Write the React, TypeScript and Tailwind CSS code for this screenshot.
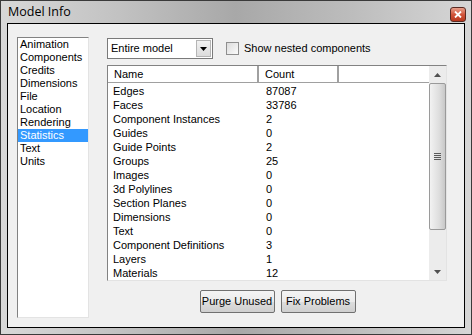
const CATEGORIES = [
  "Animation",
  "Components",
  "Credits",
  "Dimensions",
  "File",
  "Location",
  "Rendering",
  "Statistics",
  "Text",
  "Units",
];

const STATS: [string, string][] = [
  ["Edges", "87087"],
  ["Faces", "33786"],
  ["Component Instances", "2"],
  ["Guides", "0"],
  ["Guide Points", "2"],
  ["Groups", "25"],
  ["Images", "0"],
  ["3d Polylines", "0"],
  ["Section Planes", "0"],
  ["Dimensions", "0"],
  ["Text", "0"],
  ["Component Definitions", "3"],
  ["Layers", "1"],
  ["Materials", "12"],
];

export default function App() {
  return (
    <div
      className="flex h-[335px] w-[472px] flex-col border border-[#3a3a3a] bg-[linear-gradient(90deg,#d8d8d8_0%,#c2c2c2_25%,#a8a8a8_50%,#bdbdbd_75%,#d6d6d6_100%)] text-[10.5px] text-black"
      style={{ fontFamily: "'Liberation Sans', Arial, sans-serif" }}
    >
      <TitleBar />
      <div className="mx-[6px] mb-[6px] flex flex-1 border border-black bg-[#f0f0f0]">
        <ul className="ml-[9px] mt-[13px] h-[281px] w-[72px] border border-t-[#828282] border-l-[#828282] border-r-[#e3e3e3] border-b-[#e3e3e3] bg-white">
          {CATEGORIES.map((c) => (
            <li
              key={c}
              className={
                "h-[13px] whitespace-nowrap px-[2px] text-[11px] leading-[13px] " +
                (c === "Statistics" ? "bg-[#3399ff] text-white" : "")
              }
            >
              {c}
            </li>
          ))}
        </ul>

        <div className="ml-[18px] mt-[14px] flex w-[340px] flex-col">
          <div className="flex items-center">
            <Dropdown />
            <label className="ml-[13px] flex items-center gap-[5px]">
              <span className="h-[13px] w-[13px] border border-[#8f8f8f] bg-[linear-gradient(135deg,#dcdcdc,#fbfbfb)]" />
              <span className="text-[11px]">Show nested components</span>
            </label>
          </div>

          <div className="mt-[6px] flex h-[216px] border border-t-[#828282] border-l-[#828282] border-r-[#e3e3e3] border-b-[#e3e3e3] bg-white">
            <div className="flex flex-1 flex-col">
              <div className="flex h-[17px] border-b border-[#a0a0a0] text-[11px] leading-[16px]">
                <div className="w-[151px] border-r-2 border-[#a0a0a0] pl-[6px]">Name</div>
                <div className="w-[80px] border-r-2 border-[#a0a0a0] pl-[6px]">Count</div>
                <div className="flex-1" />
              </div>
              <div className="pt-[1px] text-[11px]">
                {STATS.map(([name, count]) => (
                  <div key={name} className="flex h-[14px] leading-[14px]">
                    <div className="w-[153px] whitespace-nowrap pl-[5px]">{name}</div>
                    <div className="pl-[5px]">{count}</div>
                  </div>
                ))}
              </div>
            </div>
            <Scrollbar />
          </div>

          <div className="mt-[9px] flex justify-center gap-[6px] pl-[1px]">
            <Button label="Purge Unused" />
            <Button label="Fix Problems" />
          </div>
        </div>
      </div>
    </div>
  );
}

function TitleBar() {
  return (
    <div className="flex h-[22px] items-center pl-[7px] pr-[5px]">
      <span
        className="flex-1 text-[12.5px] text-black"
        style={{ fontFamily: "'Open Sans', 'DejaVu Sans', sans-serif" }}
      >
        Model Info
      </span>
      <span className="mt-[5px] flex h-[15px] w-[16px] items-center justify-center rounded-[3px] border border-[#5a2a22] bg-[linear-gradient(180deg,#e8a08c_0%,#d2553b_50%,#b8371d_100%)]">
        <svg width="8" height="7" viewBox="0 0 8 7" aria-hidden="true">
          <path d="M1 0.5L7 6.5M7 0.5L1 6.5" stroke="white" strokeWidth="1.8" />
        </svg>
      </span>
    </div>
  );
}

function Dropdown() {
  return (
    <div className="flex h-[21px] w-[106px] items-center border border-[#7a7a7a] bg-white text-[11px]">
      <span className="flex-1 pl-[3px]">Entire model</span>
      <span className="mr-[1px] flex h-[17px] w-[15px] items-center justify-center border border-[#b5b5b5] bg-[linear-gradient(180deg,#f2f2f2,#dcdcdc)]">
        <svg width="7" height="4" viewBox="0 0 7 4" aria-hidden="true">
          <path d="M0 0H7L3.5 4Z" fill="black" />
        </svg>
      </span>
    </div>
  );
}

function Scrollbar() {
  return (
    <div className="flex w-[17px] flex-col bg-[#ececec]">
      <div className="flex h-[17px] items-center justify-center">
        <svg width="7" height="4" viewBox="0 0 7 4" aria-hidden="true">
          <path d="M0 4H7L3.5 0Z" fill="#505050" />
        </svg>
      </div>
      <div className="flex h-[147px] items-center justify-center rounded-[2px] border border-[#9a9a9a] bg-[linear-gradient(90deg,#f2f2f2,#dedede_60%,#c8c8c8)]">
        <div className="flex flex-col gap-[1px]">
          <span className="h-[1px] w-[7px] bg-[#5a5a5a]" />
          <span className="h-[1px] w-[7px] bg-[#5a5a5a]" />
          <span className="h-[1px] w-[7px] bg-[#5a5a5a]" />
          <span className="h-[1px] w-[7px] bg-[#5a5a5a]" />
        </div>
      </div>
      <div className="flex-1" />
      <div className="flex h-[17px] items-center justify-center">
        <svg width="7" height="4" viewBox="0 0 7 4" aria-hidden="true">
          <path d="M0 0H7L3.5 4Z" fill="#505050" />
        </svg>
      </div>
    </div>
  );
}

function Button({ label }: { label: string }) {
  return (
    <button className="h-[23px] w-[75px] whitespace-nowrap rounded-[2px] border border-[#707070] bg-[linear-gradient(180deg,#f4f4f4_0%,#ebebeb_50%,#dddddd_51%,#cfcfcf_100%)] text-[11px]">
      {label}
    </button>
  );
}
